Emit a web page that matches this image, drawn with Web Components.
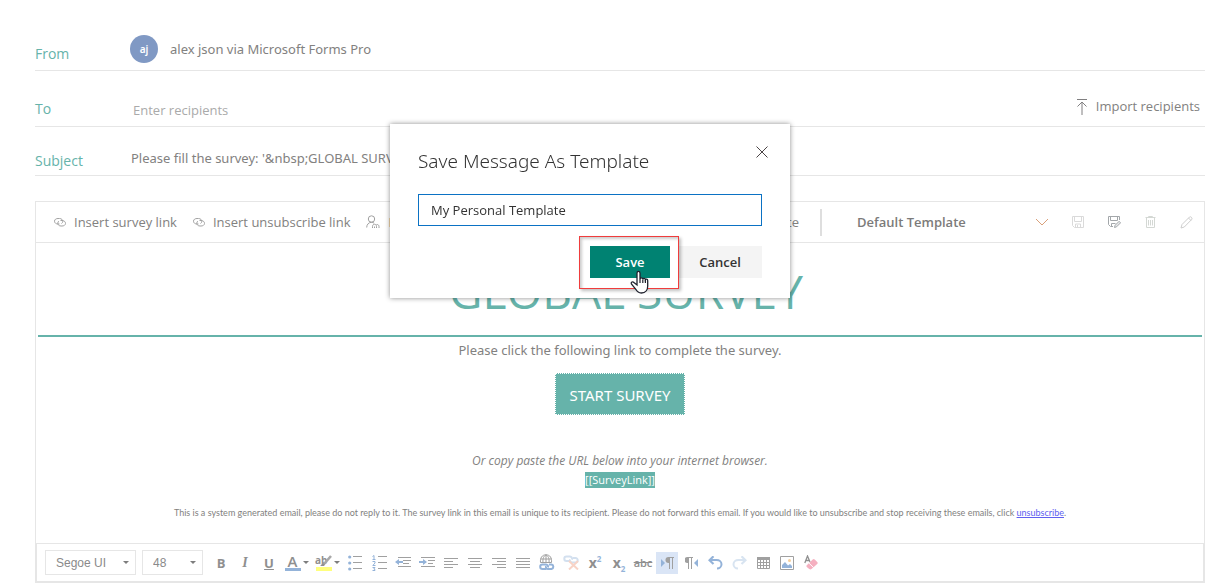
<!DOCTYPE html>
<html lang="en">
<head>
<meta charset="utf-8">
<title>Forms Pro – Send by email</title>
<style>
  body { margin: 0; background: #fff; font-family: "Open Sans", "Noto Sans", sans-serif; font-size: 13px; color: #828180; }
</style>
</head>
<body>
<message-composer></message-composer>
<script>
const define = (name, html, setup) => {
  const template = document.createElement('template');
  template.innerHTML = html;
  customElements.define(name, class extends HTMLElement {
    constructor() {
      super();
      this.attachShadow({ mode: 'open' }).append(template.content.cloneNode(true));
    }
    connectedCallback() { if (setup) setup(this, this.shadowRoot); }
  });
};

const BLUE = '#94b3d9', GREY = '#a0a0a0';
const lines = (...rows) => rows.map(([x, y, w]) => `<path d="M${x} ${y}.5h${w}" stroke="${GREY}"/>`).join('');

/* name: [width, height, markup] */
const ICONS = {
  link: [12, 12, `<g stroke="#a2a2a2"><path d="M5.500 8H4C2.200 8 .5 7 .5 5.200S2.200 2.500 4 2.500h1.500C7.500 2.500 8.800 3.900 8.800 5.300c0 1-.6 1.800-1.300 2.200"/><path d="M6.500 4.500h1.500c2 0 3.500 1.200 3.500 2.900S9.800 10 8 10H7C5 10 3.800 8.800 3.800 7.200c0-1 .5-1.700 1-2.100"/></g>`],
  person: [14, 14, `<g stroke="#a0a0a0"><circle cx="5.500" cy="4" r="3.200"/><path d="M.7 12.500c0-3 2-5.200 4.800-5.200 1 0 1.900.3 2.500.8"/><path d="M6.500 13v-1.500c0-1.500 1-2.300 2-2.300s2 .8 2 2.300V13M8.500 11.500V13M10.500 9.500c1.500-.3 2.500.8 2.500 2V13"/></g>`],
  upload: [12, 17, `<path d="M1 1.500h10M6 4v13M1.500 8.500 6 4l4.500 4.500" stroke="#807f80"/>`],
  chevron: [14, 8, `<path d="M1 1l6 6 6-6" stroke="#d9a07a"/>`],
  save: [12, 12, `<path d="M.5.5h11v11h-9l-2-2zM2.500.5v5h7v-5M3.500 11V8h5v3.500M5.500 9v2" stroke="#dadada"/>`],
  saveAs: [13, 12, `<path d="M11.500 4V.5H.5v8l2 2H5M2.500.5v4h7v-4M3.500 10V7.500h4" stroke="#a3a7aa"/><path d="M6.500 11.500l.6-2.200 4-4 1.500 1.500-4 4z" stroke="#a3a7aa" fill="#e8eaeb"/>`],
  trash: [11, 12, `<path d="M.5 1.500h10M3.500 1V.5h4V1M1.500 2v9.500h8V2M3.500 4v5.500M5.500 4v5.500M7.500 4v5.500" stroke="#d4d8d4"/>`],
  pencil: [13, 13, `<path d="M1 12l1-3.500L9.500 1c1-1 3.300 1 2.300 2.300L4.300 11zM8.500 2l2.500 2.500" stroke="#cecece"/>`],
  close: [12, 12, `<path d="M.5.5l11 11M11.500.5l-11 11" stroke="#4a4345"/>`],
  caret: [6, 3, `<path d="M0 0h6L3 3z" fill="#7d7d7d"/>`],
  bullets: [14, 16, `<g fill="${BLUE}"><circle cx="1.700" cy="2" r="1.600"/><circle cx="1.700" cy="8" r="1.600"/><circle cx="1.700" cy="14" r="1.600"/></g>${lines([5,1,9],[5,7,9],[5,13,9])}`],
  numbers: [15, 16, `<g stroke="${BLUE}"><path d="M.5 1.500l1.500-1V4M.5 4.500h3M.5 6.500h2.500v1.500L.8 10.500h2.700M.5 12.500h2.500L1.800 14l1.200.5v1H.5"/></g>${lines([6,1,9],[6,7,9],[6,13,9])}`],
  outdent: [16, 11, `${lines([3,0,13],[8,3,8],[8,6,6],[3,9,13])}<path d="M0 5l4-3v2h4v2H4v2z" fill="${BLUE}"/>`],
  indent: [16, 11, `${lines([2,0,14],[9,3,7],[9,6,5],[2,9,14])}<path d="M8 5L4 2v2H0v2h4v2z" fill="${BLUE}"/>`],
  left: [14, 10, lines([0,0,14],[0,3,9],[0,6,14],[0,9,9])],
  center: [14, 10, lines([0,0,14],[2,3,10],[0,6,14],[2,9,10])],
  right: [14, 10, lines([0,0,14],[5,3,9],[0,6,14],[5,9,9])],
  justify: [14, 10, lines([0,0,14],[0,3,14],[0,6,14],[0,9,14])],
  addLink: [16, 17, `<g stroke="#a0a0a0"><path d="M1.500 8.500C1 4 3 .8 7 .8s6 3 5.500 7.700M7 1v7.500M4 8.500c-.5-4 1-7 3-7.500 2 .5 3.500 3.500 3 7.500M1.500 5h11M1.500 8.500h11"/></g><g stroke="${BLUE}" stroke-width="2"><path d="M7 15H3.500a2.300 2.300 0 010-4.600H7a2.300 2.300 0 012 3M10 10.600h2.500a2.300 2.300 0 010 4.500H9a2.300 2.300 0 01-2-3"/></g>`],
  unlink: [16, 15, `<g stroke="#d3e0ef" stroke-width="2"><path d="M7 6H3.500a2.200 2.200 0 010-4.400H7a2.200 2.200 0 012 3M10 3h2.500a2.200 2.200 0 010 4.400H9a2.200 2.200 0 01-2-3"/></g><path d="M6 6l9 8.500M15 6l-9 8.500" stroke="#f8d3c6" stroke-width="2"/>`],
  undo: [15, 14, `<path d="M2 4h6.500c3 0 5 1.800 5 4.200s-2 4.300-4.500 4.300" stroke="${BLUE}" stroke-width="2"/><path d="M5.500.3L1.500 4.200l4 3.800" stroke="${BLUE}" stroke-width="2.200"/>`],
  redo: [15, 14, `<path d="M13 4H6.500c-3 0-5 1.800-5 4.200s2 4.300 4.500 4.300" stroke="#d8e4f1" stroke-width="2"/><path d="M9.500.3l4 3.900-4 3.800" stroke="#d8e4f1" stroke-width="2.200"/>`],
  table: [13, 12, `<path d="M0 0h13v3H0z" fill="#a0a0a0"/><path d="M.5.5h12v11H.5zM.5 5.500h12M.5 8.500h12M3.500 3v9M6.500 3v9M9.500 3v9" stroke="#a0a0a0"/>`],
  image: [14, 14, `<path d="M.5.5h13v13H.5z" stroke="#a0a0a0"/><path d="M2 12V9l3-3 3 3.500 2-1.500 2 2v2z" fill="${BLUE}"/><circle cx="9.500" cy="4.500" r="1.500" fill="#f7cf9b"/>`],
  eraser: [14, 15, `<path d="M.8 8L3.500 1 6 7M1.500 5.500h4" stroke="#909090" stroke-width="1.300"/><path d="M2.500 10.500L8.700 4.600c.7-.7 1.300-.7 2 0l2.500 2.500c.7.700.7 1.300 0 2L7.500 14c-.6.6-1.700.6-2.300 0l-2.700-2.300z" fill="#f5b0c0"/><path d="M5 8.200l4.500 4.300" stroke="#fff"/>`],
  ltr: [13, 12, `<path d="M0 2l4 4-4 4z" fill="${BLUE}"/><path d="M9 0H7.500a2.500 2.500 0 000 6H9z" fill="#a0a0a0"/><path d="M8.500.5H13M8.500 0v12M11.500 0v12" stroke="#a0a0a0"/>`],
  rtl: [13, 12, `<path d="M13 2L9 6l4 4z" fill="${BLUE}"/><path d="M3 0H2.500a2.500 2.500 0 000 6H3z" fill="#a0a0a0"/><path d="M3.500.5H8M3.500 0v12M6.500 0v12" stroke="#a0a0a0"/>`],
  brush: [17, 16, `<path d="M16 1L9 9" stroke="#a8a8a8" stroke-width="2.500"/><path d="M5 11c1-.5 1.500-2.500 3.500-2.500s2 2.500-.5 2.500z" fill="#909090"/><path d="M1 12h16v4H1z" fill="#ffff7d"/>`],
  hand: [20, 24, `<path d="M8 15V3.200c0-2.400 3-2.400 3 0V9c.4-1.700 2.700-1.500 2.800.2.500-1.300 2.500-1.100 2.600.5.600-1 2.300-.6 2.300 1v5.500c0 3.500-2 6.800-6.300 6.800-3 0-4.300-1.300-5.600-3.700L2.400 14c-.9-1.800 1.300-2.900 2.500-1.500z" fill="#fff" stroke="#20222e" stroke-width="1.300"/><path d="M11 9v4M13.800 9.500V13M16.400 10v3" stroke="#20222e" stroke-width="1.200"/>`],
};

define('ui-icon', `<style>:host{display:inline-flex;flex:none}svg{display:block;fill:none}</style><svg aria-hidden="true"></svg>`,
  (host, root) => {
    const [w, h, body] = ICONS[host.getAttribute('name')];
    const svg = root.querySelector('svg');
    svg.setAttribute('width', w);
    svg.setAttribute('height', h);
    svg.setAttribute('viewBox', `0 0 ${w} ${h}`);
    svg.innerHTML = body;
  });

define('field-row', `<style>
  :host{display:flex;align-items:flex-end;border-bottom:1px solid #e6e6e6;box-sizing:border-box}
  .label{width:96px;flex:none;font-size:14px;line-height:20px;color:#66b3aa;padding-bottom:var(--label-drop,7px)}
  .value{flex:1;min-width:0}
</style><span class="label"><slot name="label"></slot></span><div class="value"><slot></slot></div><slot name="action"></slot>`);

define('persona-chip', `<style>
  :host{display:flex;align-items:center;gap:12px;padding-bottom:7px;line-height:20px}
  .coin{width:28px;height:28px;line-height:28px;border-radius:50%;background:#8099c4;color:#fff;text-align:center;font-size:10px;font-weight:600}
</style><span class="coin"><slot name="initials"></slot></span><slot></slot>`);

define('text-field', `<style>
  :host{display:block}
  input{display:block;box-sizing:border-box;width:100%;height:20px;border:0;margin:0;padding:0;background:none;font:inherit;color:inherit;outline:0}
  input::placeholder{color:#aaa;opacity:1}
  :host([boxed]) input{height:32px;border:1px solid #0b72c4;padding:0 12px;color:#333}
</style><input type="text">`,
  (host, root) => {
    const input = root.querySelector('input');
    input.value = host.getAttribute('value') || '';
    input.placeholder = host.getAttribute('placeholder') || '';
    input.setAttribute('aria-label', host.getAttribute('label'));
  });

define('command-button', `<style>
  :host{display:flex;flex:none}
  button{display:flex;align-items:center;gap:8px;border:0;background:none;margin:0;padding:0;font:inherit;line-height:20px;color:inherit;white-space:nowrap}
</style><button type="button"><slot name="icon"></slot><slot></slot></button>`);

define('icon-button', `<style>
  :host{display:flex;flex:none;width:24px;height:22px}
  :host([wide]){width:31px}
  :host([large]){width:36px;height:40px}
  button{flex:1;display:flex;align-items:center;justify-content:center;gap:2px;margin:0 1px;border:0;padding:0;background:none;color:#8f8f8f;font:bold 13px/20px "Open Sans",sans-serif}
  :host([active]) button{background:#dae5f6}
</style><button type="button"><slot></slot></button>`,
  (host, root) => {
    const b = root.querySelector('button');
    b.setAttribute('aria-label', host.getAttribute('label'));
    if (host.hasAttribute('active')) b.setAttribute('aria-pressed', 'true');
  });

define('drop-down', `<style>
  :host{display:grid;align-items:center;flex:none}
  select,ui-icon{grid-area:1/1}
  select{appearance:none;width:100%;height:100%;margin:0;border:0;padding:0;background:none;font:inherit;color:inherit;outline:0}
  ui-icon{justify-self:end;pointer-events:none;margin-right:var(--caret-inset,6px)}
</style><select><option></option></select><ui-icon name="caret" class="small"></ui-icon><ui-icon name="chevron" class="big"></ui-icon>`,
  (host, root) => {
    root.querySelector('option').textContent = host.getAttribute('value');
    root.querySelector('select').setAttribute('aria-label', host.getAttribute('label'));
    root.querySelector(host.hasAttribute('chevron') ? '.small' : '.big').remove();
  });

define('command-bar', `<style>
  :host{display:flex;align-items:center;height:40px;border-bottom:1px solid #e6e6e6;padding-left:18px}
  .left,.right{display:flex;align-items:center}
  .left{gap:16px;flex:1;min-width:0}
  .divider{width:2px;height:27px;background:#dedede;margin:0 35px 0 21px}
  drop-down{width:203px;height:30px;font-weight:600;color:#7c7b7a;--caret-inset:11px}
</style>
<div class="left">
  <command-button><ui-icon slot="icon" name="link"></ui-icon>Insert survey link</command-button>
  <command-button><ui-icon slot="icon" name="link"></ui-icon>Insert unsubscribe link</command-button>
  <command-button><ui-icon slot="icon" name="person"></ui-icon>Insert</command-button>
</div>
<div class="right">
  <command-button>Template</command-button>
  <span class="divider"></span>
  <drop-down chevron label="Template" value="Default Template"></drop-down>
  <icon-button large label="Save"><ui-icon name="save"></ui-icon></icon-button>
  <icon-button large label="Save as"><ui-icon name="saveAs"></ui-icon></icon-button>
  <icon-button large label="Delete"><ui-icon name="trash"></ui-icon></icon-button>
  <icon-button large label="Rename"><ui-icon name="pencil"></ui-icon></icon-button>
</div>`);

define('mail-body', `<style>
  :host{display:flow-root;text-align:center;height:300px;padding:0 2px}
  h1{margin:0;padding:16px 0 11px;font-size:46px;line-height:65px;font-weight:400;color:#66b3aa;border-bottom:2px solid #66b3aa}
  p{margin:0}
  .intro{padding-top:3px;line-height:20px}
  .intro,.start{font-family:"Noto Sans",sans-serif}
  .start{display:inline-block;box-sizing:border-box;margin-top:13px;height:42px;border:1px dotted #fff;padding:0 13px;background:#66b3aa;color:#fff;font-size:15px;line-height:42px;text-decoration:none}
  .copy{margin-top:37px;font-size:12px;line-height:18px;font-style:italic}
  .token{font-size:11px;line-height:20px}
  .token span{display:inline-block;line-height:16px;background:#66b3aa;color:#fff}
  .legal{margin-top:17px;font-family:Lato,sans-serif;font-size:9px;line-height:12px}
  .legal a{color:#6060f0}
</style>
<h1>&nbsp;GLOBAL SURVEY</h1>
<p class="intro">Please click the following link to complete the survey.</p>
<a class="start" href="#">START SURVEY</a>
<p class="copy">Or copy paste the URL below into your internet browser.</p>
<p class="token"><span>[[SurveyLink]]</span></p>
<p class="legal">This is a system generated email, please do not reply to it. The survey link in this email is unique to its recipient. Please do not forward this email. If you would like to unsubscribe and stop receiving these emails, click <a href="#">unsubscribe</a>.</p>`);

define('format-bar', `<style>
  :host{display:flex;align-items:center;height:37px;border:1px solid #e6e6e6;border-width:1px 1px 2px 1px;padding-left:8px;font-family:"Liberation Sans",Arial,sans-serif;font-size:12px;color:#8a8a8a}
  drop-down{box-sizing:border-box;height:25px;border:1px solid #e6e6e6;padding-left:10px;margin-right:6px}
  .font{width:91px}.size{width:61px}
  .serif{font:italic bold 14px "Liberation Serif",serif}
  .under{text-decoration:underline}
  .color{width:16px;line-height:13px;font-size:15px;font-weight:600;border-bottom:3px solid #94b3d9}
  .mark{display:grid}
  .mark>*{grid-area:1/1}
  .mark span{font-size:10px;line-height:10px;text-align:left}
  .x{font-size:14px;line-height:16px}
  sup,sub{font-size:8px;line-height:0;color:#94b3d9}
  .strike{font-size:11px;text-decoration:line-through;font-weight:600}
</style>
<drop-down class="font" label="Font" value="Segoe UI"></drop-down>
<drop-down class="size" label="Font size" value="48"></drop-down>
<icon-button label="Bold">B</icon-button>
<icon-button label="Italic"><span class="serif">I</span></icon-button>
<icon-button label="Underline"><span class="under">U</span></icon-button>
<icon-button wide label="Font colour"><span class="color">A</span><ui-icon name="caret"></ui-icon></icon-button>
<icon-button wide label="Highlight"><span class="mark"><span>ab</span><ui-icon name="brush"></ui-icon></span><ui-icon name="caret"></ui-icon></icon-button>
<icon-button label="Bullets"><ui-icon name="bullets"></ui-icon></icon-button>
<icon-button label="Numbering"><ui-icon name="numbers"></ui-icon></icon-button>
<icon-button label="Decrease indent"><ui-icon name="outdent"></ui-icon></icon-button>
<icon-button label="Increase indent"><ui-icon name="indent"></ui-icon></icon-button>
<icon-button label="Align left"><ui-icon name="left"></ui-icon></icon-button>
<icon-button label="Align centre"><ui-icon name="center"></ui-icon></icon-button>
<icon-button label="Align right"><ui-icon name="right"></ui-icon></icon-button>
<icon-button label="Justify"><ui-icon name="justify"></ui-icon></icon-button>
<icon-button label="Insert link"><ui-icon name="addLink"></ui-icon></icon-button>
<icon-button label="Remove link"><ui-icon name="unlink"></ui-icon></icon-button>
<icon-button label="Superscript"><span class="x">x<sup>2</sup></span></icon-button>
<icon-button label="Subscript"><span class="x">x<sub>2</sub></span></icon-button>
<icon-button label="Strikethrough"><span class="strike">abc</span></icon-button>
<icon-button active label="Left to right"><ui-icon name="ltr"></ui-icon></icon-button>
<icon-button label="Right to left"><ui-icon name="rtl"></ui-icon></icon-button>
<icon-button label="Undo"><ui-icon name="undo"></ui-icon></icon-button>
<icon-button label="Redo"><ui-icon name="redo"></ui-icon></icon-button>
<icon-button label="Table"><ui-icon name="table"></ui-icon></icon-button>
<icon-button label="Picture"><ui-icon name="image"></ui-icon></icon-button>
<icon-button label="Clear formatting"><ui-icon name="eraser"></ui-icon></icon-button>`);

define('save-dialog', `<style>
  :host{position:fixed;inset:0 34px auto 0;padding-top:124px;display:flex;justify-content:center}
  section{box-sizing:border-box;width:400px;padding:22px 28px 20px;background:#fff;color:#333;box-shadow:0 0 5px rgba(0,0,0,.45)}
  header{display:flex;align-items:flex-start;justify-content:space-between;height:48px;margin-right:-6px}
  h2{margin:0;font:300 19px/30px "Noto Sans","Open Sans",sans-serif}
  header button{display:flex;border:0;padding:0;margin:0;background:none}
  footer{display:flex;justify-content:flex-end;gap:8px;margin-top:20px}
  .action{width:84px;height:32px;border:0;padding:0;font:inherit;font-weight:600;background:#f4f4f4;color:#333}
  .primary{width:80px;background:#008272;color:#fff}
  .callout{position:relative}
  .ring{position:absolute;inset:-10px -9px -11px -11px;border:1px solid #f03c3c;box-shadow:2px 2px 3px rgba(0,0,0,.25),inset 2px 2px 3px rgba(0,0,0,.2);pointer-events:none}
  .pointer{position:absolute;left:39px;top:24px}
</style>
<section role="dialog" aria-labelledby="title">
  <header><h2 id="title">Save Message As Template</h2><button type="button" aria-label="Close"><ui-icon name="close"></ui-icon></button></header>
  <text-field boxed label="Template name" value="My Personal Template"></text-field>
  <footer>
    <span class="callout"><button type="button" class="action primary">Save</button><span class="ring"></span><ui-icon class="pointer" name="hand"></ui-icon></span>
    <button type="button" class="action">Cancel</button>
  </footer>
</section>`);

define('message-composer', `<style>
  :host{display:block;padding:0 9px 0 35px}
  .from{height:71px;--label-drop:6px}
  .to{height:56px}
  .subject{height:49px;--label-drop:4px}
  .from persona-chip{margin-left:-1px}
  .from persona-chip,.subject text-field{font-family:"Noto Sans",sans-serif}
  .to text-field{padding:0 0 6px 2px}
  .subject text-field{padding-bottom:7px}
  command-button{padding:0 5px 10px 0}
  main{margin-top:25px;border:1px solid #e6e6e6;border-bottom:0}
</style>
<field-row class="from"><span slot="label">From</span><persona-chip><span slot="initials">aj</span>alex json via Microsoft Forms Pro</persona-chip></field-row>
<field-row class="to"><span slot="label">To</span><text-field label="To" placeholder="Enter recipients"></text-field>
  <command-button slot="action"><ui-icon slot="icon" name="upload"></ui-icon>Import recipients</command-button></field-row>
<field-row class="subject"><span slot="label">Subject</span><text-field label="Subject" value="Please fill the survey: '&amp;nbsp;GLOBAL SURVEY'"></text-field></field-row>
<main>
  <command-bar></command-bar>
  <mail-body></mail-body>
  <format-bar></format-bar>
</main>
<save-dialog></save-dialog>`);
</script>
</body>
</html>
